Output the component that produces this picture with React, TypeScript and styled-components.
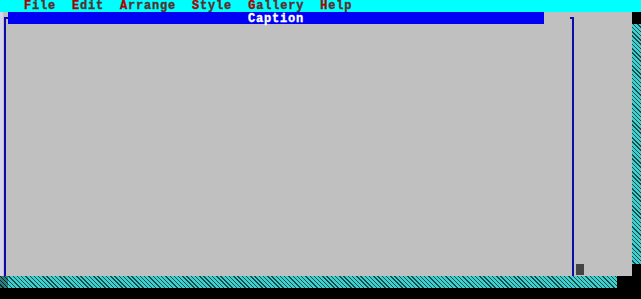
import React from "react";
import styled, { createGlobalStyle } from "styled-components";

const GlobalStyle = createGlobalStyle`
  html, body {
    margin: 0;
    padding: 0;
    background: #000;
  }
`;

const menuItems = ["File", "Edit", "Arrange", "Style", "Gallery", "Help"];

const hatch = `repeating-linear-gradient(
  45deg,
  #3fd0d0 0px,
  #3fd0d0 2px,
  #1a4a4a 2px,
  #1a4a4a 3px
)`;

const App = () => {
  return (
    <>
      <GlobalStyle />
      <Screen>
        <MenuBar>
          {menuItems.map((item) => (
            <MenuItem key={item}>
              <HotKey>{item[0]}</HotKey>
              {item.slice(1)}
            </MenuItem>
          ))}
        </MenuBar>
        <Body>
          <Desktop>
            <Window>
              <Edge side="left">
                <Rule side="left" />
              </Edge>
              <WindowMain>
                <CaptionRow>
                  <CaptionBar>Caption</CaptionBar>
                </CaptionRow>
                <WindowContent />
              </WindowMain>
              <Edge side="right">
                <Rule side="right" />
              </Edge>
            </Window>
            <Margin>
              <Thumb />
            </Margin>
          </Desktop>
          <Shadow>
            <ShadowCap />
            <ShadowFill />
            <ShadowCap />
          </Shadow>
        </Body>
        <BottomRow>
          <BottomShadow>
            <ShadowCorner />
          </BottomShadow>
        </BottomRow>
      </Screen>
    </>
  );
};

const Screen = styled.div`
  width: 641px;
  height: 299px;
  background: #000;
  display: flex;
  flex-direction: column;
  overflow: hidden;
  font-family: "Liberation Mono", "DejaVu Sans Mono", monospace;
  font-weight: bold;
  font-size: 12px;
  letter-spacing: 0.8px;
  line-height: 12px;
  -webkit-text-stroke: 0.35px currentColor;
`;

const MenuBar = styled.div`
  height: 12px;
  flex-shrink: 0;
  background: #00ffff;
  display: flex;
  padding-left: 24px;
`;

const MenuItem = styled.span`
  color: #583030;
  margin-right: 16px;
  white-space: pre;
`;

const HotKey = styled.span`
  color: #b00000;
`;

const Body = styled.div`
  height: 264px;
  flex-shrink: 0;
  display: flex;
`;

const Desktop = styled.div`
  width: 632px;
  background: #c0c0c0;
  display: flex;
`;

const Window = styled.div`
  width: 576px;
  display: flex;
`;

const Edge = styled.div<{ side: "left" | "right" }>`
  width: 8px;
  flex-shrink: 0;
  display: flex;
  justify-content: ${(p) => (p.side === "left" ? "flex-start" : "flex-end")};
  background: ${(p) =>
    p.side === "left"
      ? "linear-gradient(90deg, #d4d4ee 0 3px, transparent 3px)"
      : "transparent"};
`;

const Rule = styled.div<{ side: "left" | "right" }>`
  margin-top: 5px;
  width: 2px;
  ${(p) =>
    p.side === "left"
      ? "margin-left: 4px; border-left: 2px solid #0c0ca8;"
      : "margin-right: 2px; border-right: 2px solid #0c0ca8;"}
  border-top: 2px solid #0c0ca8;
`;

const WindowMain = styled.div`
  flex: 1;
  display: flex;
  flex-direction: column;
`;

const CaptionRow = styled.div`
  height: 12px;
  display: flex;
`;

const CaptionBar = styled.div`
  width: 536px;
  height: 12px;
  box-sizing: border-box;
  padding-top: 1px;
  background: #0000f4;
  color: #ffffff;
  text-align: center;
  white-space: pre;
`;

const WindowContent = styled.div`
  flex: 1;
`;

const Margin = styled.div`
  flex: 1;
  display: flex;
  flex-direction: column;
  justify-content: flex-end;
`;

const Thumb = styled.div`
  width: 8px;
  height: 11px;
  margin-bottom: 1px;
  background: #444444;
`;

const Shadow = styled.div`
  width: 9px;
  display: flex;
  flex-direction: column;
`;

const ShadowCap = styled.div`
  height: 12px;
  background: #000;
`;

const ShadowFill = styled.div`
  flex: 1;
  background: ${hatch};
`;

const BottomRow = styled.div`
  height: 12px;
  flex-shrink: 0;
  display: flex;
`;

const BottomShadow = styled.div`
  width: 617px;
  background: ${hatch};
`;

const ShadowCorner = styled.div`
  width: 8px;
  height: 100%;
  background: repeating-linear-gradient(
    45deg,
    #2a8080 0px,
    #2a8080 2px,
    #102020 2px,
    #102020 3px
  );
`;

export default App;
